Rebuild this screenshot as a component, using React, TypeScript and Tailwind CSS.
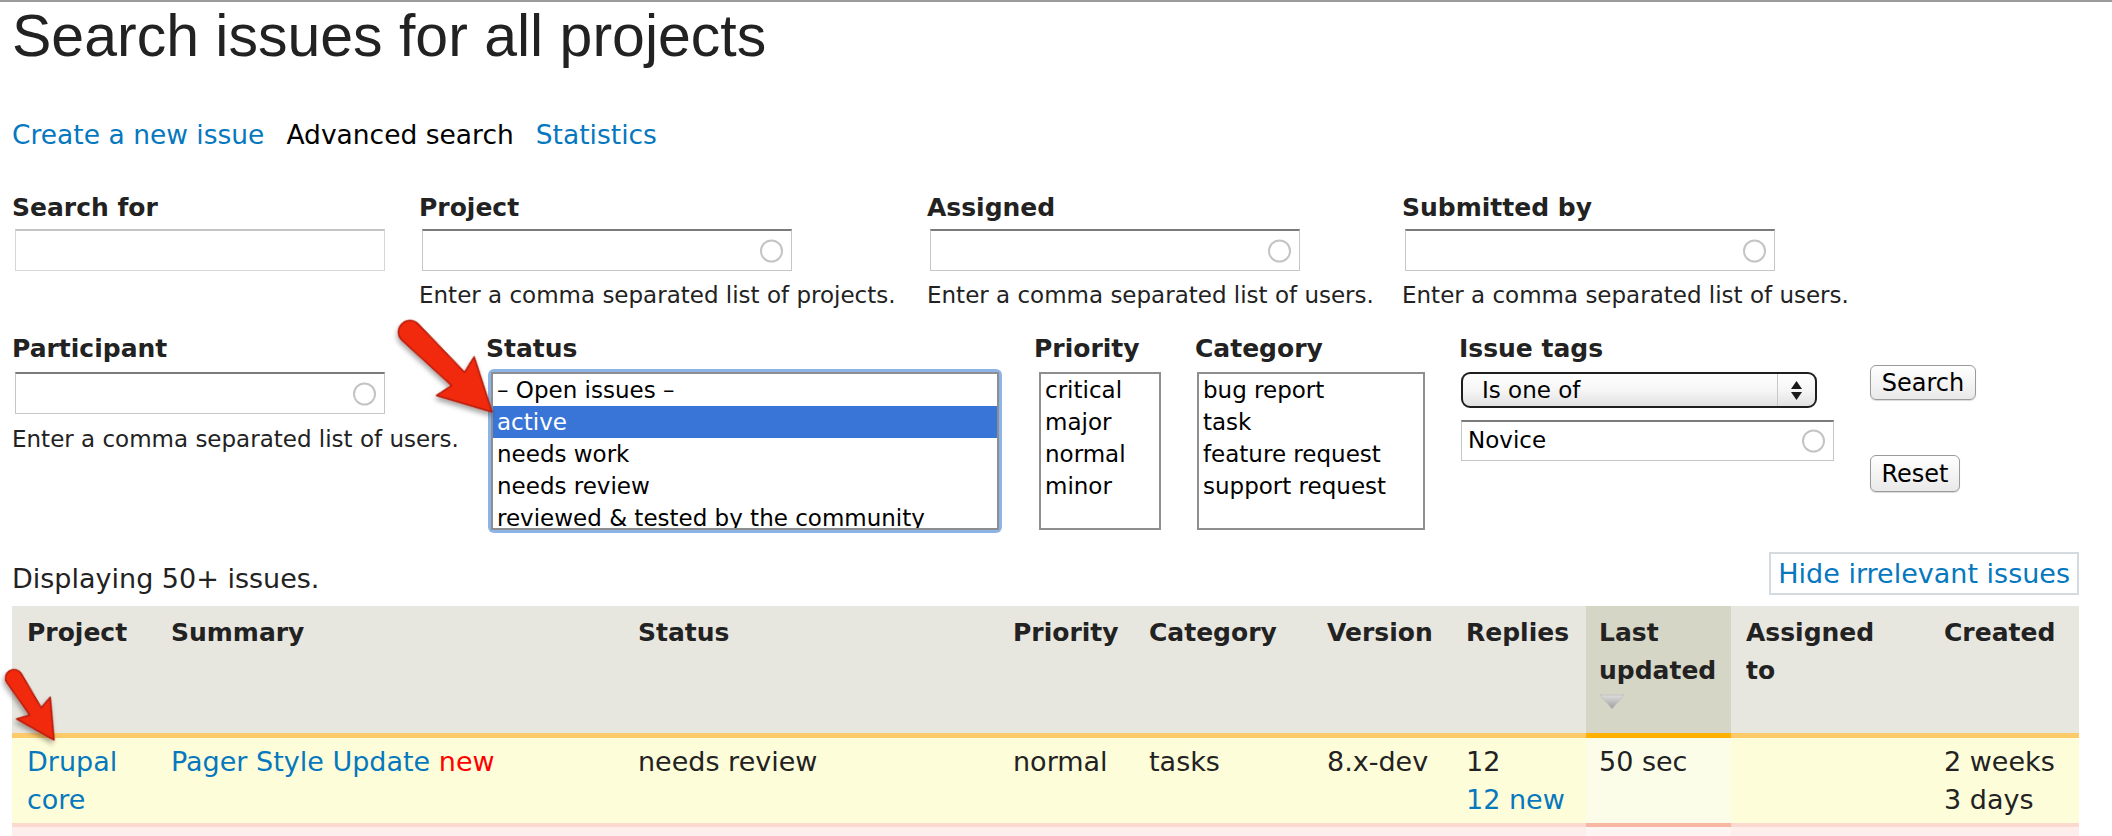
import React from "react";

const sans = "font-['DejaVu_Sans',sans-serif]";

function Throbber() {
  return (
    <span className="absolute right-[8px] top-1/2 h-[23px] w-[23px] -translate-y-1/2 rounded-full border-2 border-[#c4c4c4]" />
  );
}

function TextInput({ plain }: { plain?: boolean }) {
  return (
    <div
      className={
        plain
          ? "relative ml-[3px] h-[42px] w-[370px] border border-[#d6d6d6] border-t-2 border-t-[#c4c4c4] bg-white"
          : "relative ml-[3px] h-[42px] w-[370px] border border-[#c6c6c6] border-t-2 border-t-[#7b7b7b] bg-white"
      }
    >
      {!plain && <Throbber />}
    </div>
  );
}

function Label({ children }: { children: React.ReactNode }) {
  return <div className="text-[25px] font-bold leading-[30px] text-[#222]">{children}</div>;
}

function Hint({ children }: { children: React.ReactNode }) {
  return <div className="mt-[8px] whitespace-nowrap text-[23px] leading-[32px] text-[#222]">{children}</div>;
}

function ListBox({ items, width, selected }: { items: string[]; width: string; selected?: number }) {
  return (
    <div className={`h-[158px] overflow-hidden border-2 border-[#8e8e8e] bg-white ${width}`}>
      {items.map((it, i) => (
        <div
          key={it}
          className={
            i === selected
              ? "bg-[#3875d7] px-[4px] text-[23px] leading-[32px] text-white"
              : "px-[4px] text-[23px] leading-[32px] text-black"
          }
        >
          {it}
        </div>
      ))}
    </div>
  );
}

function Arrow({ x1, y1, x2, y2, w, head }: { x1: number; y1: number; x2: number; y2: number; w: number; head: number }) {
  const len = Math.hypot(x2 - x1, y2 - y1);
  const ang = (Math.atan2(y2 - y1, x2 - x1) * 180) / Math.PI;
  const h = w / 2;
  const hl = head * 0.95;
  const d = `M 0 ${-h} L ${len - hl + 4} ${-h * 0.8} L ${len - hl} ${-head / 2} L ${len} 0 L ${len - hl} ${head / 2} L ${len - hl + 4} ${h * 0.8} L 0 ${h} A ${h} ${h} 0 0 1 0 ${-h} Z`;
  return (
    <g transform={`translate(${x1} ${y1}) rotate(${ang})`}>
      <path d={d} fill="#f1290d" stroke="#b51b08" strokeWidth="1.5" strokeLinejoin="round" filter="url(#shadow)" />
    </g>
  );
}

export default function App() {
  const header = "border-b-[5px] border-[#fdca6a] pl-[15px] pt-[8px] text-left align-top text-[25px] font-bold leading-[38px] text-[#222]";
  const cell = "border-b-2 border-[#dedbd0] pl-[15px] pt-[5px] pb-[4px] align-top text-[27px] leading-[38px] text-[#222]";
  const pinkCell = "border-t-[4px] border-[#fcd9cf]";

  return (
    <div className={`relative min-h-[836px] w-[2112px] overflow-hidden border-t-2 border-[#9c9c9c] bg-white pl-[12px] ${sans}`}>
      <h1 className="mt-[5px] h-[59px] font-['Liberation_Sans',Arial,sans-serif] text-[59px] leading-[59px] text-[#222]">
        Search issues for all projects
      </h1>

      <div className="mt-[53px] flex gap-[22px] text-[26.5px] leading-[32px]">
        <span className="text-[#0678be]">Create a new issue</span>
        <span className="text-black">Advanced search</span>
        <span className="text-[#0678be]">Statistics</span>
      </div>

      {/* first row of filters */}
      <div className="mt-[42px] flex">
        <div className="w-[407px]">
          <Label>Search for</Label>
          <div className="mt-[6px]">
            <TextInput plain />
          </div>
        </div>
        <div className="w-[508px]">
          <Label>Project</Label>
          <div className="mt-[6px]">
            <TextInput />
          </div>
          <Hint>Enter a comma separated list of projects.</Hint>
        </div>
        <div className="w-[475px]">
          <Label>Assigned</Label>
          <div className="mt-[6px]">
            <TextInput />
          </div>
          <Hint>Enter a comma separated list of users.</Hint>
        </div>
        <div>
          <Label>Submitted by</Label>
          <div className="mt-[6px]">
            <TextInput />
          </div>
          <Hint>Enter a comma separated list of users.</Hint>
        </div>
      </div>

      {/* second row of filters */}
      <div className="mt-[23px] flex">
        <div className="w-[474px]">
          <Label>Participant</Label>
          <div className="mt-[8px]">
            <TextInput />
          </div>
          <div className="mt-[9px] text-[23px] leading-[32px] text-[#222]">Enter a comma separated list of users.</div>
        </div>
        <div className="w-[548px]">
          <Label>Status</Label>
          <div className="ml-[5px] mt-[8px] w-[508px] rounded-[3px] shadow-[0_0_0_3px_#8db4e6]">
            <ListBox
              width="w-[508px]"
              selected={1}
              items={["– Open issues –", "active", "needs work", "needs review", "reviewed & tested by the community"]}
            />
          </div>
        </div>
        <div className="w-[161px]">
          <Label>Priority</Label>
          <div className="ml-[5px] mt-[8px]">
            <ListBox width="w-[122px]" items={["critical", "major", "normal", "minor"]} />
          </div>
        </div>
        <div className="w-[264px]">
          <Label>Category</Label>
          <div className="ml-[2px] mt-[8px]">
            <ListBox width="w-[228px]" items={["bug report", "task", "feature request", "support request"]} />
          </div>
        </div>
        <div className="w-[411px]">
          <Label>Issue tags</Label>
          <div className="ml-[2px] mt-[8px] flex h-[36px] w-[356px] items-center rounded-[9px] border-2 border-[#1f1f1f] bg-gradient-to-b from-white via-[#f6f6f6] to-[#e2e2e2]">
            <span className="flex-1 pl-[19px] text-[23px] leading-[30px] text-black">Is one of</span>
            <span className="flex h-full w-[38px] flex-col items-center justify-center gap-[3px] border-l border-[#c8c8c8]">
              <svg width="11" height="8" viewBox="0 0 11 8"><path d="M5.5 0 L11 8 L0 8 Z" fill="#1a1a1a" /></svg>
              <svg width="11" height="8" viewBox="0 0 11 8"><path d="M0 0 L11 0 L5.5 8 Z" fill="#1a1a1a" /></svg>
            </span>
          </div>
          <div className="relative ml-[2px] mt-[12px] h-[41px] w-[373px] border border-[#c6c6c6] border-t-2 border-t-[#7b7b7b] bg-white">
            <span className="absolute left-[6px] top-[2px] text-[23px] leading-[32px] text-black">Novice</span>
            <Throbber />
          </div>
        </div>
        <div className="mt-[31px] flex flex-col items-start gap-[55px]">
          <button className="flex h-[35px] w-[106px] items-center justify-center rounded-[6px] border border-[#9a9a9a] bg-gradient-to-b from-white to-[#e9e9e9] text-[24px] leading-[30px] text-black shadow-[0_1px_1px_rgba(0,0,0,0.15)]">
            Search
          </button>
          <button className="flex h-[37px] w-[90px] items-center justify-center rounded-[6px] border border-[#9a9a9a] bg-gradient-to-b from-white to-[#e9e9e9] text-[24px] leading-[30px] text-black shadow-[0_1px_1px_rgba(0,0,0,0.15)]">
            Reset
          </button>
        </div>
      </div>

      <div className="mt-[22px] flex w-[2067px] items-end justify-between">
        <span className="text-[27px] leading-[32px] text-[#222]">Displaying 50+ issues.</span>
        <span className="flex h-[43px] items-center border-2 border-[#d3dae0] bg-white px-[7px] text-[27px] leading-[32px] text-[#0678be]">
          Hide irrelevant issues
        </span>
      </div>

      <table className="mt-[11px] w-[2067px] table-fixed border-collapse">
        <colgroup>
          <col className="w-[144px]" />
          <col className="w-[467px]" />
          <col className="w-[375px]" />
          <col className="w-[136px]" />
          <col className="w-[178px]" />
          <col className="w-[139px]" />
          <col className="w-[135px]" />
          <col className="w-[145px]" />
          <col className="w-[198px]" />
          <col className="w-[150px]" />
        </colgroup>
        <thead>
          <tr className="h-[129px] bg-[#e8e7df]">
            <th className={header}>Project</th>
            <th className={header}>Summary</th>
            <th className={header}>Status</th>
            <th className={header}>Priority</th>
            <th className={header}>Category</th>
            <th className={header}>Version</th>
            <th className={header}>Replies</th>
            <th className="border-b-[5px] border-[#ffb000] bg-[#d6d6c6] pl-[13px] pt-[8px] text-left align-top text-[25px] font-bold leading-[38px] text-[#222]">
              Last
              <br />
              updated
              <div className="mt-[4px]">
                <svg width="26" height="16" viewBox="0 0 26 16">
                  <defs>
                    <linearGradient id="tri" x1="0" y1="0" x2="0" y2="1">
                      <stop offset="0" stopColor="#dedede" />
                      <stop offset="1" stopColor="#9c9c9c" />
                    </linearGradient>
                  </defs>
                  <path d="M1 1 L25 1 L13 15 Z" fill="url(#tri)" stroke="#c2c2c2" strokeWidth="1" />
                </svg>
              </div>
            </th>
            <th className={header}>
              Assigned
              <br />
              to
            </th>
            <th className={header}>Created</th>
          </tr>
        </thead>
        <tbody>
          <tr className="bg-[#fefdd9]">
            <td className={`${cell} text-[#0678be]`}>Drupal core</td>
            <td className={cell}>
              <span className="text-[#0678be]">Pager Style Update</span> <span className="text-[#ff0000]">new</span>
            </td>
            <td className={cell}>needs review</td>
            <td className={cell}>normal</td>
            <td className={cell}>tasks</td>
            <td className={cell}>8.x-dev</td>
            <td className={cell}>
              12
              <br />
              <span className="text-[#0678be]">12 new</span>
            </td>
            <td className="border-b-2 border-[#dedbd0] bg-[#fcfde9] pl-[13px] pt-[5px] pb-[4px] align-top text-[27px] leading-[38px] text-[#222]">
              50 sec
            </td>
            <td className={cell}></td>
            <td className={cell}>
              2 weeks
              <br />3 days
            </td>
          </tr>
          <tr className="h-[60px] bg-[#fdeeec]">
            <td className={pinkCell} />
            <td className={pinkCell} />
            <td className={pinkCell} />
            <td className={pinkCell} />
            <td className={pinkCell} />
            <td className={pinkCell} />
            <td className={pinkCell} />
            <td className="border-t-[4px] border-[#f8b7a3] bg-[#fef5f3]" />
            <td className={pinkCell} />
            <td className={pinkCell} />
          </tr>
        </tbody>
      </table>

      {/* annotation arrows drawn over the page */}
      <svg className="pointer-events-none absolute left-0 top-0" width="2112" height="836">
        <defs>
          <filter id="shadow" x="-20%" y="-20%" width="140%" height="140%">
            <feDropShadow dx="2" dy="3" stdDeviation="2.5" floodColor="#000" floodOpacity="0.35" />
          </filter>
        </defs>
        <Arrow x1={410} y1={330} x2={492} y2={410} w={23} head={54} />
        <Arrow x1={14} y1={676} x2={54} y2={738} w={17} head={40} />
      </svg>
    </div>
  );
}
